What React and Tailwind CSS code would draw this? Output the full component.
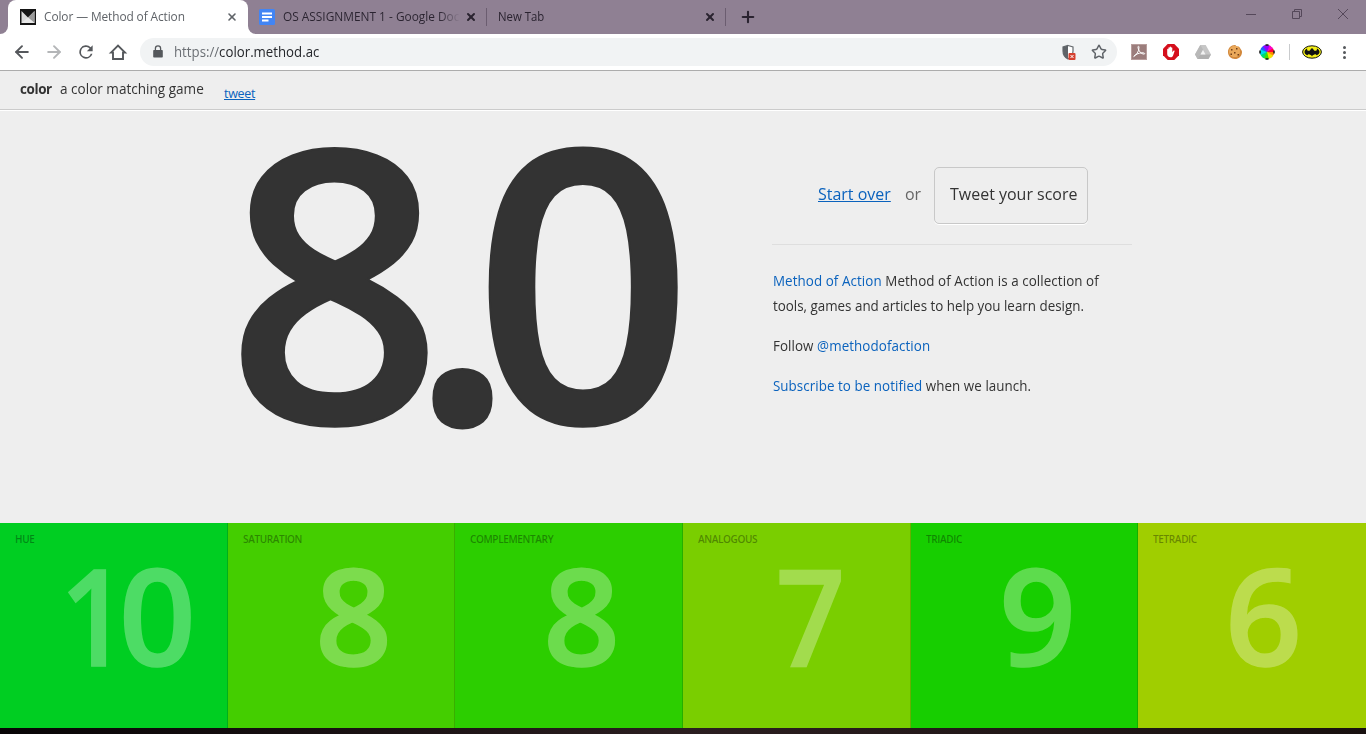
import React from "react";
import { ArrowLeft, ArrowRight, X, Plus, Star } from "lucide-react";

const pageFont = "font-['Open_Sans','Noto_Sans',sans-serif]";

function MethodLogo() {
  return (
    <svg width="16" height="16" viewBox="0 0 16 16" className="shrink-0">
      <rect width="16" height="16" fill="#151515" />
      <path d="M1.5 2 8 8.5 14.5 2V14h-13Z" fill="#d9d9d9" />
      <path d="M8 8.5 14.5 2V14L8 8.5Z" fill="#9b9b9b" />
      <path d="M1.5 14 8 8.5 14.5 14Z" fill="#e8e8e8" />
    </svg>
  );
}

function DocsLogo() {
  return (
    <svg width="16" height="16" viewBox="0 0 16 16" className="shrink-0">
      <rect width="16" height="16" rx="1.5" fill="#4285f4" />
      <path d="M3 4.5h10M3 8h10M3 11.5h6.5" stroke="#fff" strokeWidth="1.8" />
    </svg>
  );
}

function TabStrip() {
  return (
    <div className="flex h-[34px] bg-[#8f8093] text-[12.5px] text-[#2a2330]">
      <div className="flex w-2 items-end bg-white">
        <div className="h-full w-full rounded-br-lg bg-[#8f8093]" />
      </div>
      <div className="flex w-[240px] items-center rounded-t-lg bg-white pl-3">
        <MethodLogo />
        <span className="ml-2 w-[178px] whitespace-nowrap text-[#5f6368]">
          <span className="inline-block origin-left scale-x-95 tracking-[-0.1px]">Color — Method of Action</span>
        </span>
        <X size={12} strokeWidth={3.2} className="ml-1 text-[#5f6368]" />
      </div>
      <div className="flex w-[239px] bg-white">
        <div className="flex h-full w-full items-center rounded-bl-lg bg-[#8f8093] pl-[11px]">
          <DocsLogo />
          <span className="ml-2 w-[175px] whitespace-nowrap">
            <span className="inline-block origin-left scale-x-[0.95] bg-linear-to-r from-[#2a2330] from-88% to-[#8f8093] bg-clip-text text-transparent">
              OS ASSIGNMENT 1 - Google Doc
            </span>
          </span>
          <X size={12} strokeWidth={4} className="ml-[7px] shrink-0" />
        </div>
      </div>
      <div className="my-2 -ml-px flex w-[240px] items-center border-x border-[#6b5d70] pl-[11px]">
        <span className="w-[206px]">
          <span className="inline-block origin-left scale-x-[0.91]">New Tab</span>
        </span>
        <X size={12} strokeWidth={4} className="shrink-0" />
      </div>
      <div className="flex items-center pl-[13px]">
        <Plus size={18} strokeWidth={2.8} />
      </div>
      <svg width="104" height="12" viewBox="0 0 104 12" className="mt-2 mr-4 ml-auto" fill="none" stroke="#55485a" strokeWidth="1">
        <path d="M0 6.5h10" />
        <path d="M46.5 3.5h7v7h-7zM48.5 3.5v-2h7v7h-2" />
        <path d="m92 1 10 10M102 1 92 11" />
      </svg>
    </div>
  );
}

function Toolbar() {
  return (
    <div className="flex h-9 items-center bg-white">
      <div className="flex w-[140px] items-center pl-3">
        <ArrowLeft size={20} strokeWidth={2.3} className="text-[#55585c]" />
        <ArrowRight size={20} strokeWidth={2.3} className="ml-3 text-[#b4b6b8]" />
        <svg width="20" height="20" viewBox="0 0 24 24" className="ml-3" fill="#55585c">
          <path d="M17.65 6.35A8 8 0 1 0 19.73 14h-2.08A6 6 0 1 1 12 6c1.66 0 3.14.69 4.22 1.78L13 11h7V4z" />
        </svg>
        <svg width="20" height="20" viewBox="0 0 20 20" className="ml-3" fill="none" stroke="#55585c" strokeWidth="1.9">
          <path d="M3 10.6 10 3.6l7 7H15V17H5v-6.4Z" />
        </svg>
      </div>
      <div className="flex h-7 w-[977px] items-center rounded-full bg-[#f1f3f4] pl-[13px]">
        <svg width="10" height="14" viewBox="0 0 10 14" fill="#55585c">
          <path d="M1.2 5h7.6c.6 0 1 .4 1 1v5.5c0 .6-.4 1-1 1H1.2c-.6 0-1-.4-1-1V6c0-.6.4-1 1-1Z" />
          <path d="M2.4 6V3.400a2.600 2.600 0 0 1 5.200 0V6" fill="none" stroke="#55585c" strokeWidth="1.3" />
        </svg>
        <div className="ml-[11px] flex origin-left scale-x-[0.945] text-[14px] leading-5 text-[#25272b]">
          <span className="text-[#6b6f74]">https://</span>
          <span>color.method.ac</span>
        </div>
        <div className="ml-auto flex items-center gap-[14px] pr-[10px]">
          <svg width="16" height="17" viewBox="0 0 16 17">
            <path d="M7 1.500 12 3v4c0 4-2 6.500-5 8-3-1.500-5-4-5-8V3Z" fill="#fff" stroke="#666a6e" strokeWidth="1.200" />
            <path d="M7 1.500 2 3v4c0 4 2 6.500 5 8Z" fill="#5f6368" />
            <rect x="7.500" y="9" width="7" height="7" rx="1" fill="#d5402f" />
            <path d="m9.500 11 3 3m0-3-3 3" stroke="#fff" strokeWidth="1" />
          </svg>
          <Star size={16} strokeWidth={2.2} className="text-[#5f6368]" />
        </div>
      </div>
      <Extensions />
    </div>
  );
}

const wheel = ["#ff00c8", "#ff0032", "#ff8a00", "#f4e500", "#43df00", "#00dc76", "#00d9f0", "#245bff", "#9700ff"];
const wheelTurns = [10, 60, 90, 120, 165, 205, 245, 290, 325];

function Extensions() {
  return (
    <div className="flex items-center gap-4 pl-[14px]">
      <svg width="16" height="16" viewBox="0 0 16 16">
        <rect x=".5" y=".5" width="15" height="15" fill="#9b7d7c" stroke="#b89e9d" />
        <path d="M2.700 12.500c2.500-1.200 5.500-5 5.300-9.500 0-1.300-1.300-.8-1 .6.700 3.400 3 6.400 6 6.500 1.500 0 .6-1.600-2-1.300-3.500.3-6.800 1.600-8.300 3.700Z" fill="none" stroke="#fff" strokeWidth="1" />
      </svg>
      <svg width="16" height="16" viewBox="0 0 16 16">
        <path d="M4.700 0h6.600L16 4.700v6.600L11.300 16H4.700L0 11.300V4.700Z" fill="#d50f1c" />
        <path d="M4.200 5.500c0-.9 1.200-.9 1.200 0V4c0-1 1.300-1 1.300 0v-.7c0-1 1.300-1 1.300 0V4c0-1 1.300-1 1.300 0v4.200l1.100-1.400c.7-.7 1.500-.1 1.100.6L9.900 12c-.5.900-1.200 1.200-2.300 1.200-2.200 0-3.400-1.300-3.400-3.500Z" fill="#fff" />
      </svg>
      <svg width="16" height="16" viewBox="0 0 16 16">
        <path d="M5.300 1h5.400L16 10.500 13.400 15H2.600L0 10.500Z" fill="#c6c6c6" />
        <path d="M5.300 1 0 10.500 2.600 15 8 5.500Z" fill="#b8b8b8" />
        <path d="M2.600 15h10.800l2.600-4.500H5.200Z" fill="#b0b0b0" />
        <path d="m8 6 2.500 4.500h-5Z" fill="#f2f2f2" />
      </svg>
      <svg width="16" height="16" viewBox="0 0 16 16">
        <path d="M8 1c1 0 1 1.500 2 1.500S12 2 13 4s2.300 2.500 2 4.500C14.500 12.500 12 15 8 15s-7-3-7-7 3-7 7-7Z" fill="#d2883b" />
        <path d="M7.500 2C4 2 2 4.500 2 7.500S4 13 7.500 13 13 11 13 7.500 11 2 7.500 2Z" fill="#eaa95b" />
        <path d="M4 5h1.500v1.500H4zM9 4h1.500v1.500H9zM7 8h1.500v1.500H7zM3.500 9.500H5V11H3.500zM10.500 10H12v1.500h-1.500z" fill="#713f18" />
      </svg>
      <svg width="16" height="16" viewBox="0 0 16 16">
        <circle cx="8" cy="8" r="6.500" fill="#43df00" />
        {wheel.map((color, i) => (
          <path key={color} d="M8 8V1a7 7 0 0 1 5.800 3.100Z" fill={color} transform={`rotate(${wheelTurns[i]} 8 8)`} />
        ))}
        <path d="M6.500 1h3M6.500 15h3M1 6.500v3M15 6.500v3" stroke="#161616" strokeWidth="1.500" />
      </svg>
      <div className="-mx-[2px] h-4 w-px bg-[#c9cbcd]" />
      <svg width="20" height="14" viewBox="0 0 20 14" className="-ml-0.5">
        <ellipse cx="10" cy="7" rx="9.400" ry="6.200" fill="#f4ef16" stroke="#111" strokeWidth="1" />
        <path d="M5.200 3.500C3.500 4.200 2.500 5.400 2.500 7s1.200 2.700 3 3.300c.3-1 1.500-1.300 2.300-.5.9-.2 1.700.6 2.200 1.800.5-1.200 1.300-2 2.200-1.800.8-.8 2-.5 2.300.5 1.800-.6 3-1.700 3-3.300s-1-2.800-2.700-3.500c.5 1.500-.3 2.300-1.600 2.300-1 0-1.700-.6-1.900-1.500L10.700 3l-.4.800h-.6L9.300 3l-.6 1.300c-.2.900-.9 1.500-1.900 1.500-1.300 0-2.100-.8-1.600-2.300Z" fill="#111" />
      </svg>
      <div className="-ml-[3px] flex w-[18px] flex-col items-center gap-[2px]">
        <i className="size-[3px] rounded-full bg-[#55585c]" />
        <i className="size-[3px] rounded-full bg-[#55585c]" />
        <i className="size-[3px] rounded-full bg-[#55585c]" />
      </div>
    </div>
  );
}

function SiteHeader() {
  return (
    <header className="flex h-10 items-start border-t border-b border-t-[#acacac] border-b-[#cbcbcb] bg-[#eee] pl-5 text-[#333]">
      <h1 className="mt-2 w-10 text-[14px] leading-5 font-bold tracking-[-0.4px] whitespace-nowrap">
        <span className="inline-block origin-left scale-x-[0.96]">color</span>
      </h1>
      <p className="mt-2 w-[164px] text-[14.5px] leading-5 whitespace-nowrap">
        <span className="inline-block origin-left scale-x-[0.935]">a color matching game</span>
      </p>
      <a className="mt-[13px] text-[12.5px] leading-5 tracking-[-0.3px] text-[#0a62bd] underline">tweet</a>
    </header>
  );
}

function Score() {
  return (
    <div className="flex h-[412px] w-[772px] pl-[226px] text-[380px] leading-[329px] font-semibold text-[#333] [-webkit-text-stroke:2px_#333]">
      <span className="w-[181px]">8</span>
      <span className="w-[66px] text-[405px] leading-[310px]">.</span>
      <span className="origin-left scale-x-[1.015]">0</span>
    </div>
  );
}

function Aside() {
  return (
    <aside className="w-[360px] pt-[56px] text-[#333]">
      <div className="flex h-[78px] items-start border-b border-[#dedede] pl-[46px] text-[17px]">
        <a className="mt-[14px] w-[87px] leading-[26px] whitespace-nowrap text-[#0a62bd]">
          <span className="inline-block origin-left scale-x-[0.94] underline">Start over</span>
        </a>
        <span className="mt-[14px] w-[29px] leading-[26px] text-[#666]">
          <span className="inline-block origin-left scale-x-[0.94]">or</span>
        </span>
        <button className="h-[57px] w-[154px] rounded-[5px] border border-[#c8c8c8] pb-1 pl-[15px] text-left whitespace-nowrap shadow-[0_1px_0_#fff]">
          <span className="inline-block origin-left scale-x-[0.94]">Tweet your score</span>
        </button>
      </div>
      <div className="w-max origin-left scale-x-[0.923] pt-[23px] pl-px text-[14.5px] leading-[25px] whitespace-nowrap">
        <p>
          <span className="tracking-[0.085px]"><a className="text-[#0a62bd]">Method of Action</a> Method of Action is a collection of</span>
          <br />tools, games and articles to help you learn design.
        </p>
        <p className="mt-[15px] tracking-[0.085px]">Follow <a className="text-[#0a62bd]">@methodofaction</a></p>
        <p className="mt-[15px] tracking-[0.06px]"><a className="text-[#0a62bd]">Subscribe to be notified</a> when we launch.</p>
      </div>
    </aside>
  );
}

const results = [
  { label: "HUE", score: "10", box: "w-[228px] bg-[#00ce22]", pad: "pl-[60px]" },
  { label: "SATURATION", score: "8", box: "w-[227px] bg-[#44ce00]", pad: "pl-[87px]" },
  { label: "COMPLEMENTARY", score: "8", box: "w-[228px] bg-[#2cce00]", pad: "pl-[88px]" },
  { label: "ANALOGOUS", score: "7", box: "w-[228px] bg-[#7ace00]", pad: "pl-[89px]" },
  { label: "TRIADIC", score: "9", box: "w-[227px] bg-[#17ce00]", pad: "pl-[88px]" },
  { label: "TETRADIC", score: "6", box: "w-[228px] bg-[#a0ce00]", pad: "pl-[87px]" },
];

const digitShape = {
  1: "mr-[-18.5px] origin-left scale-x-[0.88]",
  7: "origin-center scale-x-[0.9]",
};

export default function App() {
  return (
    <div className={`flex h-[734px] w-[1366px] flex-col overflow-hidden bg-[#eee] ${pageFont}`}>
      <TabStrip />
      <Toolbar />
      <SiteHeader />
      <main className="flex h-[413px] border-t border-white">
        <Score />
        <Aside />
      </main>
      <section className="flex h-[205px]">
        {results.map((r) => (
          <div key={r.label} className={`${r.box} flex flex-col border-r border-black/15 last:border-r-0`}>
            <h2 className="h-[22px] pt-[10px] pl-[15px] text-[10px] leading-3 font-semibold tracking-[-0.35px] text-black/35">{r.label}</h2>
            <p className={`${r.pad} flex text-[135px] leading-[138px] font-semibold whitespace-nowrap text-white opacity-30 [-webkit-text-stroke:1.5px_#fff]`}>
              {[...r.score].map((digit) => (
                <span key={digit} className={digitShape[digit]}>{digit}</span>
              ))}
            </p>
          </div>
        ))}
      </section>
      <footer className="h-1.5 bg-linear-to-r from-[#080506] via-[#2b1e20] to-[#18100f]" />
    </div>
  );
}
